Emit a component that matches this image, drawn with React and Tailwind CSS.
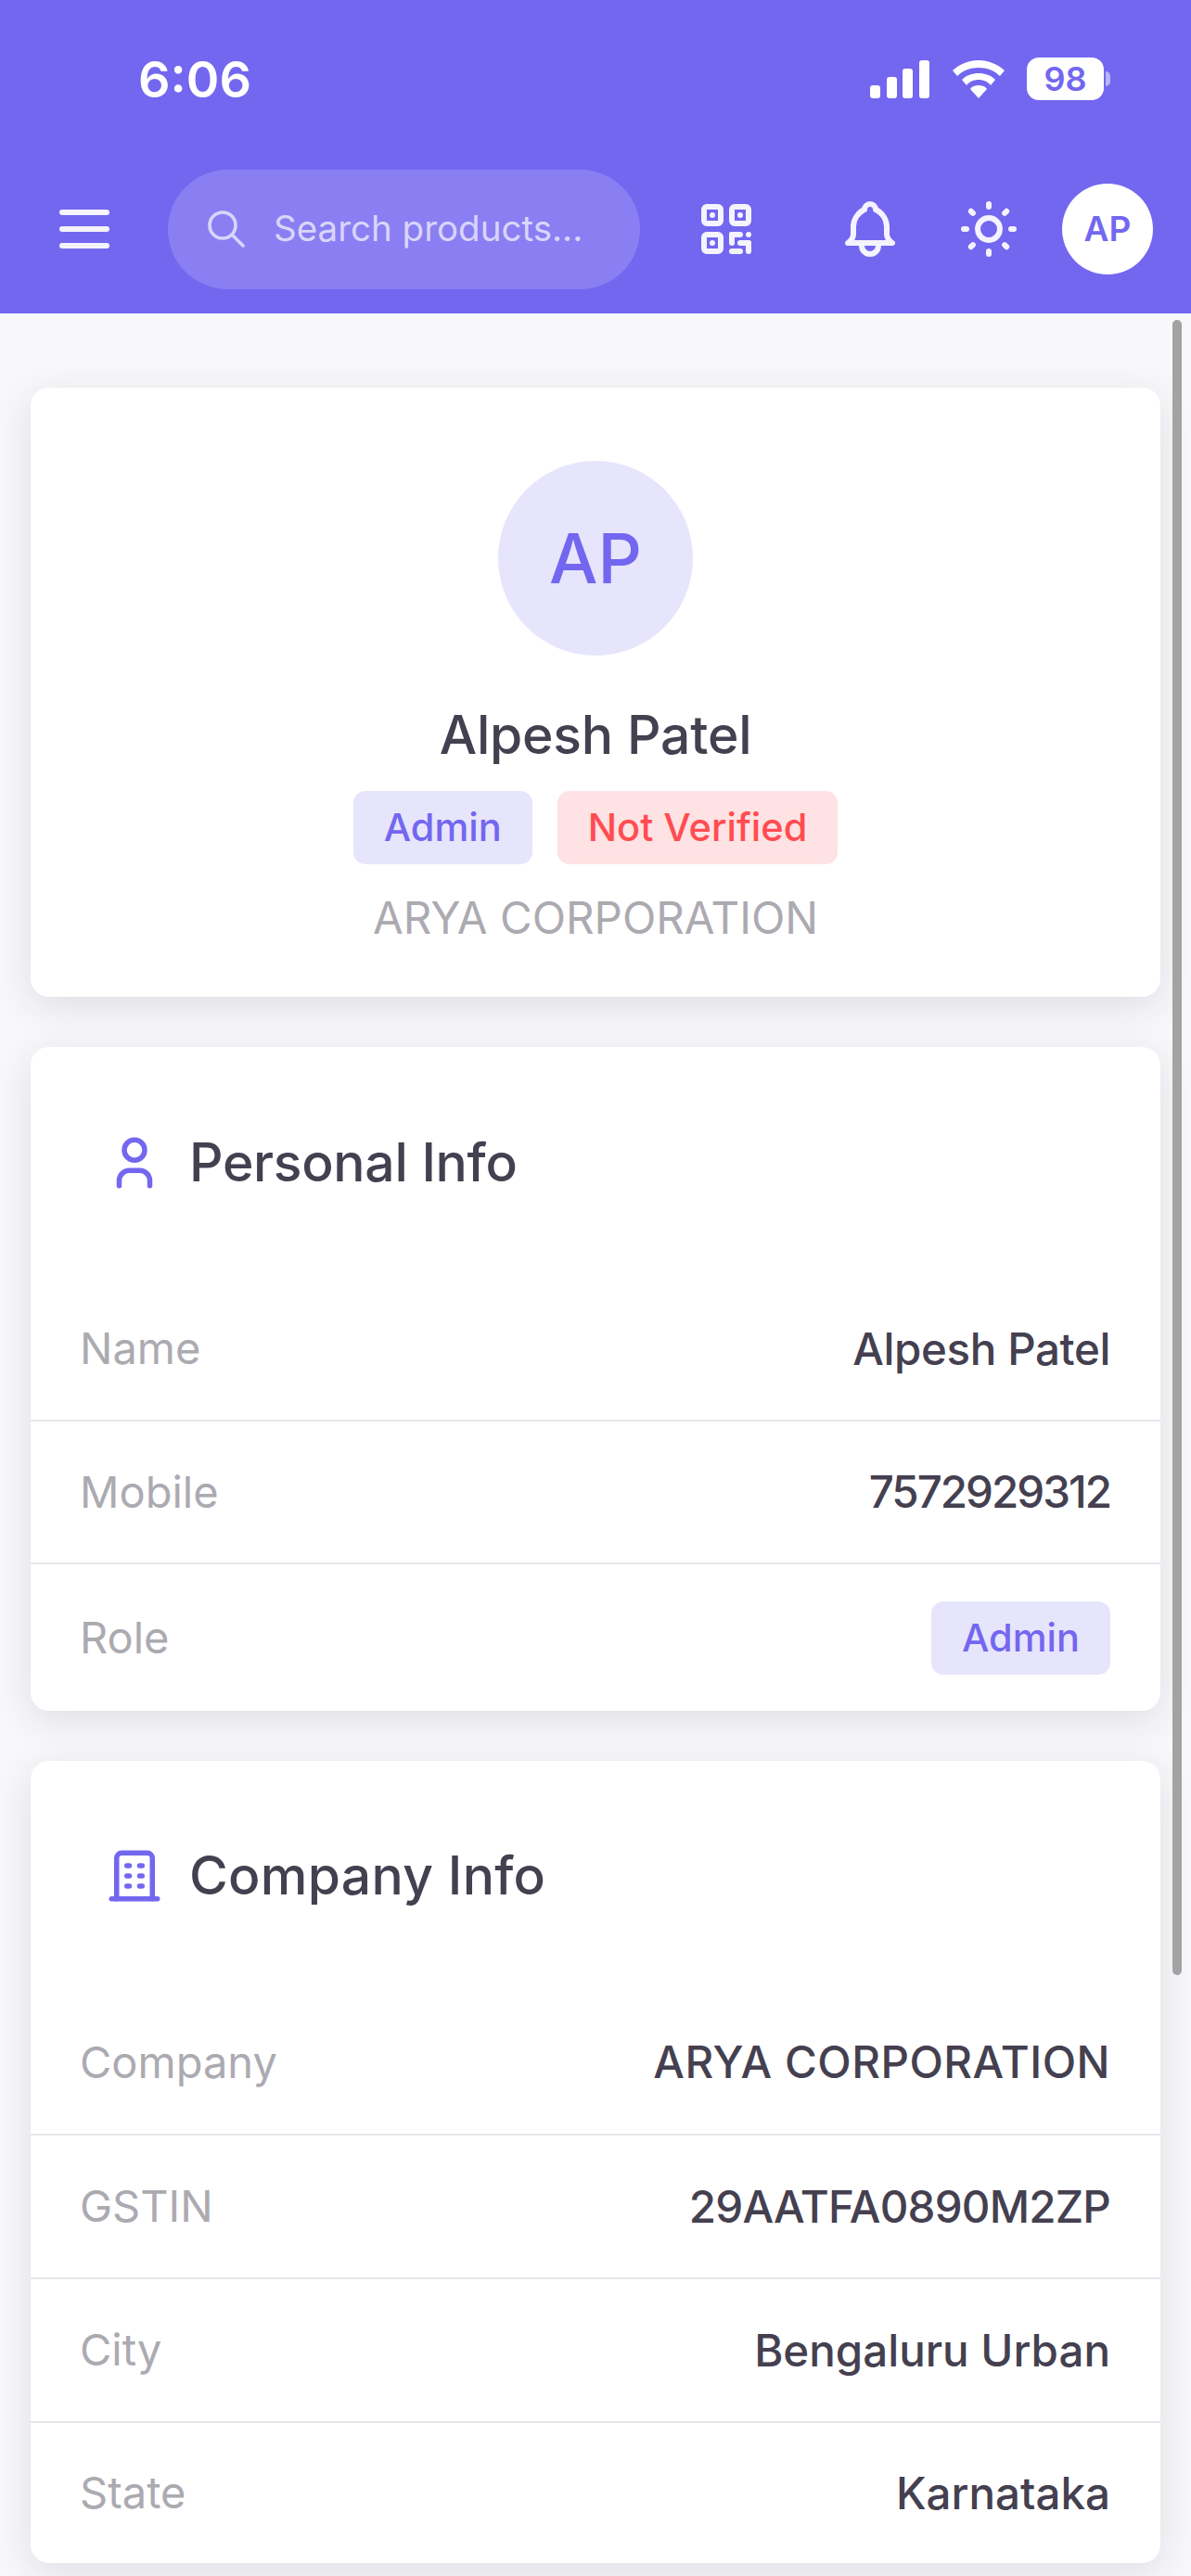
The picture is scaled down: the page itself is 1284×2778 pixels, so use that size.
import React from "react";
import { TbMenu2, TbSearch, TbQrcode, TbBell, TbSun, TbUser, TbBuilding } from "react-icons/tb";

function Signal() {
  return (
    <svg width="64" height="41" viewBox="0 0 64 41" fill="#fff">
      <rect x="0" y="27" width="11" height="14" rx="3" />
      <rect x="18" y="18" width="11" height="23" rx="3" />
      <rect x="35" y="9" width="11" height="32" rx="3" />
      <rect x="53" y="0" width="11" height="41" rx="3" />
    </svg>
  );
}

function Wifi() {
  return (
    <svg width="56" height="41" viewBox="0 0 56 41" fill="#fff">
      <path d="M28 0C17 0 8 4 0 11l5 6c6-6 14-9 23-9s17 3 23 9l5-6C48 4 39 0 28 0Z" />
      <path d="M28 14c-7 0-13 2-18 7l5 6c3-4 8-6 13-6s10 2 13 6l5-6c-5-5-11-7-18-7Z" />
      <path d="M28 27c-4 0-7 1-9 4l9 10 9-10c-2-3-5-4-9-4Z" />
    </svg>
  );
}

function Badge({ tone, children }) {
  return (
    <span
      className={
        "h-[79px] px-[33px] rounded-[13px] flex items-center text-[41.5px] font-medium tracking-normal " +
        (tone === "red" ? "bg-[#ffe2e3] text-[#ff4c51]" : "bg-[#e7e5fb] text-[#7367f0]")
      }
    >
      {children}
    </span>
  );
}

function Row({ label, last, height, valueClass = "", children }) {
  return (
    <div
      className={
        "flex items-center justify-between pl-[53px] pr-[54px] " +
        height +
        (last ? "" : " border-b-2 border-[#e6e6e8]")
      }
    >
      <span className="text-[47px] text-[#acaab1]">{label}</span>
      <span className={"text-[47.5px] font-medium text-[#444050] " + valueClass}>{children}</span>
    </div>
  );
}

function Section({ icon, title, headerHeight, titleClass = "", children }) {
  return (
    <section className="bg-white rounded-[20px] shadow-[0_10px_40px_rgba(47,43,61,0.12)]">
      <div className={"pl-[79px] flex items-center gap-[26px] " + headerHeight}>
        {icon}
        <h2 className={"text-[57px] font-medium text-[#444050] " + titleClass}>{title}</h2>
      </div>
      {children}
    </section>
  );
}

export default function App() {
  return (
    <div
      className="relative w-[1284px] h-[2778px] overflow-hidden bg-[#f8f7fa]"
      style={{ fontFamily: '"Inter", "Noto Sans", sans-serif' }}
    >
      <header className="h-[338px] bg-[#7367f0]">
        <div className="h-[170px] flex items-center justify-between pl-[149px] pr-[87px]">
          <span className="text-[54px] font-semibold text-white">6:06</span>
          <div className="flex items-center">
            <Signal />
            <div className="ml-[25px]">
              <Wifi />
            </div>
            <div className="ml-[24px] w-[83px] h-[46px] rounded-[13px] bg-white flex items-center justify-center text-[36px] font-semibold text-[#7367f0]">
              98
            </div>
            <div className="ml-[2px] w-[5px] h-[16px] rounded-r-full bg-[#b9b3f7]" />
          </div>
        </div>
        <div className="h-[154px] flex items-center pl-[55px]">
          <TbMenu2 size={72} className="text-[#f4f3fe]" />
          <div className="ml-[54px] w-[509px] h-[129px] rounded-full bg-[#8a7ff2] flex items-center pl-[39px] gap-[27px]">
            <TbSearch size={48} strokeWidth={1.8} className="text-[#d9d5fb]" />
            <span className="text-[38.5px] text-[#d9d5fb]">Search products...</span>
          </div>
          <TbQrcode size={72} className="ml-[57px] text-[#f4f3fe]" />
          <TbBell size={72} className="ml-[83px] text-[#f4f3fe]" />
          <TbSun size={72} className="ml-[56px] text-[#f4f3fe]" />
          <div className="ml-[43px] w-[98px] h-[98px] rounded-full bg-white flex items-center justify-center text-[37px] font-semibold text-[#7367f0]">
            AP
          </div>
        </div>
      </header>

      <main className="px-[33px] pt-[80px] flex flex-col gap-[54px]">
        <section className="bg-white rounded-[20px] shadow-[0_10px_40px_rgba(47,43,61,0.12)] pt-[79px] pb-[55px] flex flex-col items-center">
          <div className="w-[210px] h-[210px] rounded-full bg-[#e7e5fb] flex items-center justify-center text-[74px] font-medium text-[#7367f0]">
            AP
          </div>
          <h1 className="mt-[56px] h-[60px] leading-[60px] text-[57px] tracking-[-0.2px] font-medium text-[#444050]">Alpesh Patel</h1>
          <div className="mt-[30px] flex gap-[27px]">
            <Badge>Admin</Badge>
            <Badge tone="red">Not Verified</Badge>
          </div>
          <p className="mt-[28px] h-[60px] leading-[60px] text-[47.5px] text-[#acaab1]">ARYA CORPORATION</p>
        </section>

        <Section icon={<TbUser size={66} className="text-[#7367f0]" />} title="Personal Info" headerHeight="h-[249px]" titleClass="tracking-[-0.3px]">
          <Row label="Name" height="h-[155px]" valueClass="tracking-[-0.4px]">Alpesh Patel</Row>
          <Row label="Mobile" height="h-[154px]" valueClass="tracking-[-2px]">7572929312</Row>
          <Row label="Role" last height="h-[158px]">
            <Badge>Admin</Badge>
          </Row>
        </Section>

        <Section icon={<TbBuilding size={66} className="text-[#7367f0]" />} title="Company Info" headerHeight="h-[248px]" titleClass="tracking-[0.3px]">
          <Row label="Company" height="h-[156px]" valueClass="tracking-[0.5px]">ARYA CORPORATION</Row>
          <Row label="GSTIN" height="h-[155px]" valueClass="tracking-[-0.8px]">29AATFA0890M2ZP</Row>
          <Row label="City" height="h-[155px]">Bengaluru Urban</Row>
          <Row label="State" last height="h-[151px]">Karnataka</Row>
        </Section>
      </main>

      <div className="absolute left-[1264px] top-[345px] w-[10px] h-[1785px] rounded-full bg-[#a3a3a3]" />
    </div>
  );
}
